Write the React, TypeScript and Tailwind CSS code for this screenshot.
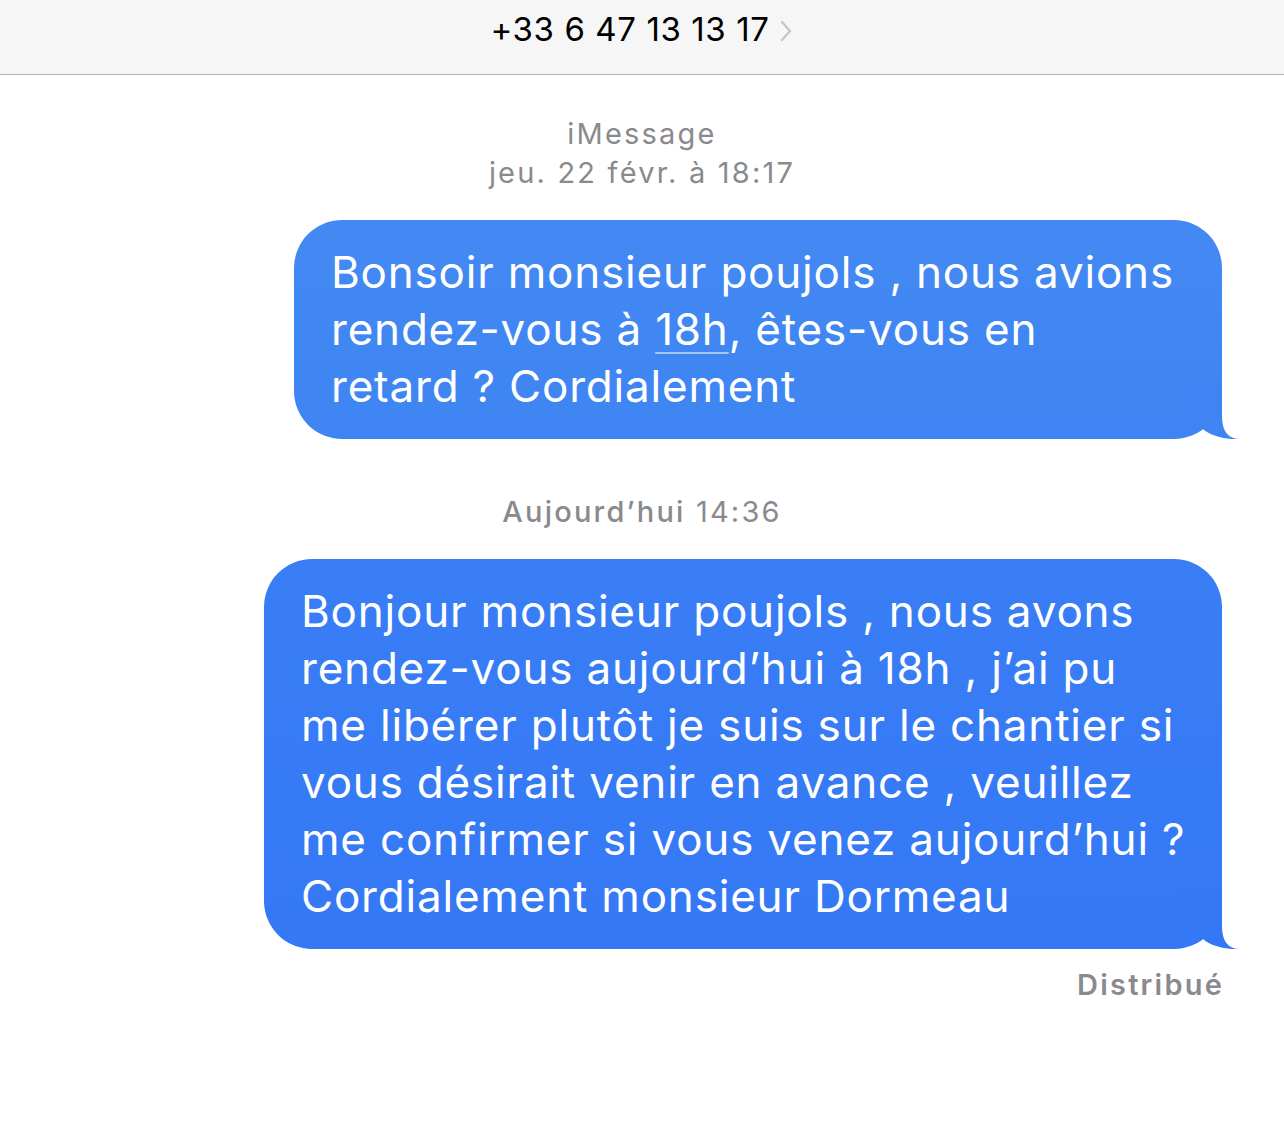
import React from "react";

function Tail({ color }: { color: string }) {
    return (
        <svg
            className="absolute right-[-18px] bottom-0"
            width="60"
            height="60"
            viewBox="0 0 60 60"
        >
            <path
                d="M0 0 L42 0 L42 37 Q42 60 60 60 C48 61 30 57 23 50 L0 40 Z"
                fill={color}
            />
        </svg>
    );
}

interface BubbleProps {
    lines: React.ReactNode[]
    width: string
    bg: string
    tail: string
}

function Bubble(props: BubbleProps) {
    return (
        <div className="flex justify-end pr-[62px]">
            <div className={`relative rounded-[48px] px-[37px] pt-[24px] pb-[24px] text-white text-[44px] leading-[57px] tracking-[0.8px] whitespace-nowrap ${props.width} ${props.bg}`}>
                {props.lines.map((l, i) => (
                    <div key={i}>{l}</div>
                ))}
                <Tail color={props.tail} />
            </div>
        </div>
    );
}

export default function App() {
    return (
        <div className="w-[1284px] h-[1143px] bg-white overflow-hidden" style={{ fontFamily: "Inter, 'Noto Sans', sans-serif" }}>
            {/* header */}
            <div className="h-[75px] bg-[#f6f6f6] border-b border-[#b3b3b3] flex items-start justify-center">
                <div className="flex items-center mt-[9px] h-[42px]">
                    <span className="text-[33px] text-black tracking-[0.6px]">+33 6 47 13 13 17</span>
                    <svg width="16" height="24" viewBox="0 0 16 24" className="ml-[8px] mt-[2px]">
                        <path d="M4 3 L12 12 L4 21" fill="none" stroke="#c5c5c8" strokeWidth="2.2" strokeLinecap="round" strokeLinejoin="round" />
                    </svg>
                </div>
            </div>

            <div className="pt-[39px]">
                <div className="text-center text-[#8a8a8e] text-[29px] leading-[39px] tracking-[2.2px]">
                    <div>iMessage</div>
                    <div>jeu. 22 févr. à 18:17</div>
                </div>

                <div className="mt-[28px]">
                    <Bubble
                        width="w-[928px]"
                        bg="bg-gradient-to-b from-[#4489f3] to-[#3e85f3]"
                        tail="#3e85f3"
                        lines={[
                            "Bonsoir monsieur poujols , nous avions",
                            <>rendez-vous à <span className="underline decoration-[#a6c7f8] decoration-2 underline-offset-[7px]">18h</span>, êtes-vous en</>,
                            "retard ? Cordialement",
                        ]}
                    />
                </div>

                <div className="mt-[53px] text-center text-[#8a8a8e] text-[29px] leading-[39px] tracking-[2.2px]">
                    <span className="font-medium">Aujourd’hui</span> 14:36
                </div>

                <div className="mt-[28px]">
                    <Bubble
                        width="w-[958px]"
                        bg="bg-gradient-to-b from-[#397ef5] to-[#3478f6]"
                        tail="#3478f6"
                        lines={[
                            "Bonjour monsieur poujols , nous avons",
                            "rendez-vous aujourd’hui à 18h , j’ai pu",
                            "me libérer plutôt je suis sur le chantier si",
                            "vous désirait venir en avance , veuillez",
                            "me confirmer si vous venez aujourd’hui ?",
                            "Cordialement monsieur Dormeau",
                        ]}
                    />
                </div>

                <div className="mt-[16px] pr-[60px] text-right text-[#8a8a8e] text-[29px] leading-[39px] tracking-[2.2px] font-semibold">
                    Distribué
                </div>
            </div>
        </div>
    );
}
